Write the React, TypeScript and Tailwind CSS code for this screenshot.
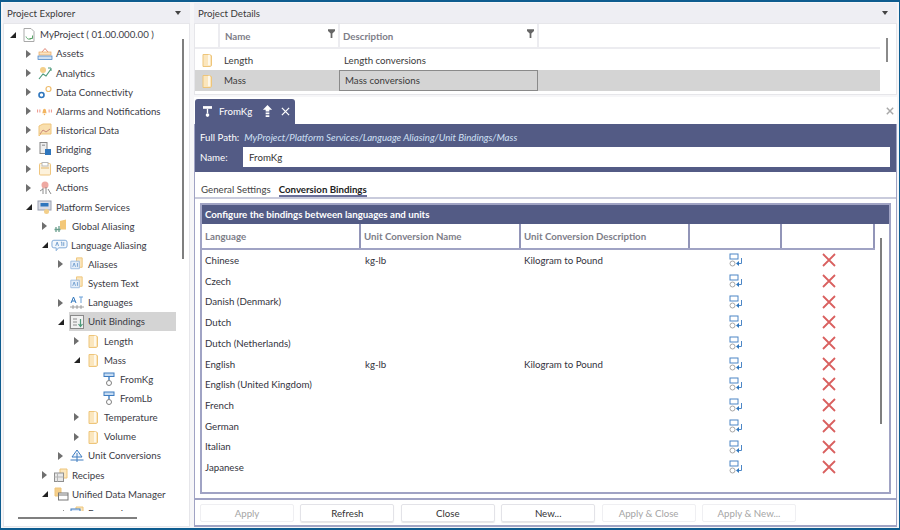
import type { ReactNode } from 'react';

const FONT = "font-['Lato','Open_Sans',sans-serif]";

const PAD = ['pl-[2px]', 'pl-[18px]', 'pl-[34px]', 'pl-[50px]', 'pl-[66px]', 'pl-[82px]'];

type Icon = () => ReactNode;

function Svg({ children, className = 'w-4 h-4' }: { children: ReactNode; className?: string }) {
  return (
    <svg viewBox="0 0 16 16" fill="none" className={`${className} shrink-0`}>
      {children}
    </svg>
  );
}

const Folder: Icon = () => (
  <Svg>
    <path d="M4 2.5h6.5l2 1.2v10l-1.5.8H4z" fill="#fbe6bd" stroke="#eec57a" />
    <path d="M10 2.8v10.5" stroke="#fff" strokeWidth="1.4" />
  </Svg>
);

const Project: Icon = () => (
  <Svg>
    <path d="M3 1.5h7l3 3v10H3z" fill="#fff" stroke="#a9a9a9" />
    <path d="M5 9.5c1 3 4 3.5 6 1.5M11.500 8.500v3h-3" stroke="#5aa469" />
  </Svg>
);

const Assets: Icon = () => (
  <Svg>
    <path d="M5 6l3-3.500L11 6" stroke="#e28a7a" />
    <rect x="2" y="6" width="12" height="3" fill="#fbe3c2" stroke="#e8a65f" strokeWidth="0.7" />
    <rect x="1" y="10" width="14" height="3.500" fill="#cfe0f3" stroke="#3e7cc0" strokeWidth="0.7" />
  </Svg>
);

const Analytics: Icon = () => (
  <Svg>
    <circle cx="6" cy="5" r="3" fill="#f3cf8a" />
    <path d="M2 14l4-5 3 2 5-7" stroke="#4d9a7a" strokeWidth="1.2" />
    <path d="M11 3h3v3" stroke="#4d9a7a" />
  </Svg>
);

const DataConn: Icon = () => (
  <Svg>
    <circle cx="4.500" cy="11" r="2.500" stroke="#2f76bd" strokeWidth="1.600" />
    <circle cx="11.500" cy="5" r="2.500" stroke="#eebc6c" strokeWidth="1.200" />
  </Svg>
);

const Alarm: Icon = () => (
  <svg viewBox="0 0 22 16" fill="none" className="w-[17px] h-4 shrink-0 -ml-[1px]">
    <path d="M8 11c1-1 .5-6 3-6s2 5 3 6z" fill="#f2b561" />
    <circle cx="11" cy="12.500" r="1" fill="#f2b561" />
    <path d="M2 6v4M5 6v4M17 6v4M20 6v4" stroke="#ee9d92" strokeWidth="1.400" />
  </svg>
);

const Historical: Icon = () => (
  <Svg>
    <path d="M2 4l4-2h8v10H4l-2 2z" fill="#f9dfae" stroke="#efc57d" />
    <path d="M3 12l3-4 3 2 4-3" stroke="#c98a7c" />
  </Svg>
);

const Bridging: Icon = () => (
  <Svg>
    <rect x="3" y="1.500" width="7" height="11" fill="#eee" stroke="#888" />
    <rect x="5" y="3.500" width="3" height="1.500" fill="#aaa" />
    <rect x="8" y="8" width="6" height="6" fill="#2f76bd" />
  </Svg>
);

const Reports: Icon = () => (
  <Svg>
    <rect x="2.500" y="2.500" width="11" height="11.500" rx="1" fill="#fdf2dc" stroke="#efc57d" />
    <rect x="5" y="1.500" width="6" height="3.500" fill="#fff" stroke="#b9b9b9" />
    <path d="M4 7h8" stroke="#e0b56a" />
  </Svg>
);

const Actions: Icon = () => (
  <Svg>
    <circle cx="8" cy="5" r="3.500" fill="#eea9a2" />
    <path d="M6 8v6M9 7v7M3 11l3-2M11 9l3 5" stroke="#8c8c8c" />
  </Svg>
);

const Platform: Icon = () => (
  <Svg>
    <rect x="1" y="2" width="13" height="9" fill="#dadde6" stroke="#9aa0b0" />
    <rect x="3.500" y="4" width="8" height="3.500" fill="#2f76bd" />
    <circle cx="9.500" cy="12.500" r="2.500" fill="#f3cf8a" />
  </Svg>
);

const GlobalAlias: Icon = () => (
  <Svg>
    <path d="M7 3l6-1.500v10H7z" fill="#f3c879" />
    <path d="M3 14V9M6 14V8M1.500 11.500h6" stroke="#6a9f8d" strokeWidth="1.300" />
  </Svg>
);

const Bubble: Icon = () => (
  <svg viewBox="0 0 18 16" fill="none" className="w-[17px] h-4 shrink-0 -ml-[2px]">
    <path d="M3 3h12a2 2 0 012 2v4a2 2 0 01-2 2H8l-2.500 3v-3H3a2 2 0 01-2-2V5a2 2 0 012-2z" fill="#f2f7fc" stroke="#7ba7d7" />
    <path d="M5 9l1.500-4L8 9M10.500 5h1v4M13.500 5v4" stroke="#4c83bf" strokeWidth="0.8" />
  </svg>
);

const AliasFolder: Icon = () => (
  <svg viewBox="0 0 18 16" fill="none" className="w-[17px] h-4 shrink-0 -ml-[1px]">
    <path d="M9 1.500h6v10H9z" fill="#fbe6bd" stroke="#eec57a" />
    <path d="M3 5h9v8H3z" fill="#e4eef9" stroke="#9dbce0" />
    <path d="M5 11l1.500-4L8 11M10 7v4" stroke="#5b8fc7" strokeWidth="0.8" />
  </svg>
);

const Languages: Icon = () => (
  <Svg>
    <path d="M2 8l2.500-6L7 8M3 6h3" stroke="#2f76bd" />
    <path d="M10 2h4M12 2v6" stroke="#6aa0d8" />
    <path d="M1 12h14M4 10v4M8 10v4M12 10v4" stroke="#8c8c8c" strokeWidth="0.8" />
  </Svg>
);

const UnitBindings: Icon = () => (
  <Svg>
    <rect x="1.500" y="1.500" width="13" height="13" fill="#f1f1f1" stroke="#8a8a8a" />
    <path d="M4 5h4M4 8h4M4 11h4" stroke="#8a8a8a" />
    <path d="M11.500 5v7M9.500 10l2 2.500 2-2.500" stroke="#4d9a7a" strokeWidth="1.200" />
  </Svg>
);

const Binding: Icon = () => (
  <Svg>
    <rect x="3" y="2" width="10" height="3.500" fill="#c6dcf3" stroke="#3e7cc0" />
    <path d="M8 5.500v4" stroke="#3e7cc0" strokeWidth="1.400" />
    <circle cx="8" cy="12" r="2.500" fill="#fff" stroke="#7f7f7f" />
  </Svg>
);

const UnitConv: Icon = () => (
  <Svg>
    <path d="M8 2L3 9h10z" fill="#f1f6fc" stroke="#3e7cc0" />
    <path d="M1.500 12h13M8 5v9" stroke="#3e7cc0" />
  </Svg>
);

const Recipes: Icon = () => (
  <Svg>
    <path d="M7 2h7v9H7z" fill="#fbe6bd" stroke="#eec57a" />
    <rect x="1.500" y="6" width="9" height="8.500" fill="#e8e8e8" stroke="#8f8f8f" />
    <path d="M4.500 6v8.500M1.500 10h9" stroke="#b5b5b5" />
  </Svg>
);

const Udm: Icon = () => (
  <Svg>
    <path d="M2 2h6v8H2z" fill="#f6cf8a" stroke="#eec57a" />
    <rect x="5.500" y="7" width="9.500" height="7" fill="#fff" stroke="#777" />
    <path d="M5.500 9h9.500" stroke="#777" />
  </Svg>
);

const Expressions: Icon = () => (
  <Svg>
    <path d="M7 2h7v9H7z" fill="#fbe6bd" stroke="#eec57a" />
    <rect x="2" y="4" width="9" height="8" fill="#dfeafa" stroke="#3e7cc0" />
  </Svg>
);

type Node = { label: string; depth: number; icon: Icon; arrow?: 'open' | 'closed'; selected?: boolean };

const tree: Node[] = [
  { label: 'MyProject ( 01.00.000.00 )', depth: 0, icon: Project, arrow: 'open' },
  { label: 'Assets', depth: 1, icon: Assets, arrow: 'closed' },
  { label: 'Analytics', depth: 1, icon: Analytics, arrow: 'closed' },
  { label: 'Data Connectivity', depth: 1, icon: DataConn, arrow: 'closed' },
  { label: 'Alarms and Notifications', depth: 1, icon: Alarm, arrow: 'closed' },
  { label: 'Historical Data', depth: 1, icon: Historical, arrow: 'closed' },
  { label: 'Bridging', depth: 1, icon: Bridging, arrow: 'closed' },
  { label: 'Reports', depth: 1, icon: Reports, arrow: 'closed' },
  { label: 'Actions', depth: 1, icon: Actions, arrow: 'closed' },
  { label: 'Platform Services', depth: 1, icon: Platform, arrow: 'open' },
  { label: 'Global Aliasing', depth: 2, icon: GlobalAlias, arrow: 'closed' },
  { label: 'Language Aliasing', depth: 2, icon: Bubble, arrow: 'open' },
  { label: 'Aliases', depth: 3, icon: AliasFolder, arrow: 'closed' },
  { label: 'System Text', depth: 3, icon: AliasFolder },
  { label: 'Languages', depth: 3, icon: Languages, arrow: 'closed' },
  { label: 'Unit Bindings', depth: 3, icon: UnitBindings, arrow: 'open', selected: true },
  { label: 'Length', depth: 4, icon: Folder, arrow: 'closed' },
  { label: 'Mass', depth: 4, icon: Folder, arrow: 'open' },
  { label: 'FromKg', depth: 5, icon: Binding },
  { label: 'FromLb', depth: 5, icon: Binding },
  { label: 'Temperature', depth: 4, icon: Folder, arrow: 'closed' },
  { label: 'Volume', depth: 4, icon: Folder, arrow: 'closed' },
  { label: 'Unit Conversions', depth: 3, icon: UnitConv, arrow: 'closed' },
  { label: 'Recipes', depth: 2, icon: Recipes, arrow: 'closed' },
  { label: 'Unified Data Manager', depth: 2, icon: Udm, arrow: 'open' },
  { label: 'Expressions', depth: 3, icon: Expressions, arrow: 'open' },
];

const bindings = [
  ['Chinese', 'kg-lb', 'Kilogram to Pound'],
  ['Czech', '', ''],
  ['Danish (Denmark)', '', ''],
  ['Dutch', '', ''],
  ['Dutch (Netherlands)', '', ''],
  ['English', 'kg-lb', 'Kilogram to Pound'],
  ['English (United Kingdom)', '', ''],
  ['French', '', ''],
  ['German', '', ''],
  ['Italian', '', ''],
  ['Japanese', '', ''],
];

const buttons = [
  { label: 'Apply', off: true },
  { label: 'Refresh' },
  { label: 'Close' },
  { label: 'New...' },
  { label: 'Apply & Close', off: true },
  { label: 'Apply & New...', off: true },
];

function Arrow({ kind }: { kind?: 'open' | 'closed' }) {
  return (
    <span className="w-[14px] h-full flex items-center justify-start pl-[4px] shrink-0">
      {kind === 'closed' && <span className="w-0 h-0 border-y-[4px] border-y-transparent border-l-[5px] border-l-[#6f6f6f]" />}
      {kind === 'open' && <span className="w-0 h-0 border-t-[6px] border-t-transparent border-r-[6px] border-r-[#222]" />}
    </span>
  );
}

function PanelTitle({ title }: { title: string }) {
  return (
    <div className="h-5 shrink-0 bg-[#eeeef3] flex items-center justify-between pl-1 pr-[9px] text-[#3a3a3a]">
      <span>{title}</span>
      <span className="w-0 h-0 border-x-[3px] border-x-transparent border-t-[4px] border-t-[#444]" />
    </div>
  );
}

function Explorer() {
  return (
    <div className="w-[187px] flex flex-col shrink-0">
      <PanelTitle title="Project Explorer" />
      <div className="relative flex-1 bg-white border border-[#e6e6ea] pt-[1px] overflow-hidden">
        <div className="h-[486px] overflow-hidden">
          {tree.map((n) => (
            <div key={n.label} className={`h-[19.15px] flex items-center ${PAD[n.depth]}`}>
              <Arrow kind={n.arrow} />
              <div className={`flex items-center h-full gap-[3px] ${n.selected ? 'bg-[#d4d4d4] w-[107px] ml-[1px]' : 'pl-[1px]'}`}>
                <n.icon />
                <span className="whitespace-nowrap text-[#3b3b45]">{n.label}</span>
              </div>
            </div>
          ))}
        </div>
        <div className="absolute left-[178px] top-[15px] w-[2px] h-[220px] bg-[#7f7f7f]" />
        <div className="absolute left-[14px] top-[493px] h-[2px] w-[119px] bg-[#7f7f7f]" />
      </div>
    </div>
  );
}

function FilterIcon() {
  return (
    <svg viewBox="0 0 8 10" className="w-[7px] h-[9px]">
      <path d="M0 0h8v2L5 5v5H3V5L0 2z" fill="#666" />
    </svg>
  );
}

function Details() {
  return (
    <div className="h-[92px] shrink-0 flex flex-col">
      <PanelTitle title="Project Details" />
      <div className="relative flex-1 bg-white border border-[#e6e6ea] pr-[16px]">
        <div className="flex h-[25px] border-b-2 border-[#ececf0] font-bold text-[#7d7d88]">
          <div className="w-[25px] border-r-2 border-[#ececf0]" />
          <div className="w-[120px] border-r-2 border-[#ececf0] flex justify-between pl-[5px] pr-[3px] pt-[5px]">
            <span>Name</span>
            <FilterIcon />
          </div>
          <div className="w-[199px] border-r-2 border-[#ececf0] flex justify-between pl-[3px] pr-[3px] pt-[5px]">
            <span>Description</span>
            <FilterIcon />
          </div>
        </div>
        <div className="flex h-[20px] items-center mt-[1px]">
          <div className="w-[24px] flex justify-center"><Folder /></div>
          <div className="w-[120px] pl-[5px]">Length</div>
          <div className="pl-[5px]">Length conversions</div>
        </div>
        <div className="flex h-[21px] items-center bg-[#d4d4d4]">
          <div className="w-[24px] flex justify-center"><Folder /></div>
          <div className="w-[120px] pl-[5px]">Mass</div>
          <div className="w-[199px] h-full border border-[#8a8a8a] pl-[5px] flex items-center">Mass conversions</div>
        </div>
        <div className="absolute right-[8px] top-[14px] w-[2px] h-[24px] bg-[#8a8a8a]" />
      </div>
    </div>
  );
}

function BindIcon() {
  return (
    <svg viewBox="0 0 14 14" fill="none" className="w-[14px] h-[14px]">
      <rect x="1" y="1" width="8" height="5" fill="#fff" stroke="#4c86c6" />
      <circle cx="3.500" cy="10.500" r="2.500" stroke="#a6a6a6" />
      <path d="M12.500 5v5.500H8" stroke="#4c86c6" />
      <path d="M10 8v5l-3-2.500z" fill="#2f76bd" />
    </svg>
  );
}

function DeleteIcon() {
  return (
    <svg viewBox="0 0 14 14" fill="none" className="w-[14px] h-[14px]">
      <path d="M1 1l12 12M13 1L1 13" stroke="#d9605f" strokeWidth="1.800" />
    </svg>
  );
}

function BindingsTable() {
  return (
    <div className="relative mx-[5px] mt-[4px] h-[291px] border-2 border-[#a0a3c4] overflow-hidden">
      <div className="h-[20px] bg-[#535b85] flex items-center pl-[3px] font-bold text-white -mt-[1px]">
        Configure the bindings between languages and units
      </div>
      <div className="flex h-[26px] w-[673px] border-b-2 border-[#a0a3c4] font-bold text-[#7d7d88]">
        {['Language', 'Unit Conversion Name', 'Unit Conversion Description', '', ''].map((h, i) => (
          <div key={i} className={`border-r-2 border-[#9295b8] pl-[3px] flex items-center ${['w-[159px]', 'w-[160px]', 'w-[169px]', 'w-[92px]', 'w-[93px]'][i]}`}>
            {h}
          </div>
        ))}
      </div>
      {bindings.map(([lang, name, desc]) => (
        <div key={lang} className="flex items-center h-[20.7px] text-[#33333d]">
          <div className="w-[159px] pl-[3px]">{lang}</div>
          <div className="w-[160px] pl-[4px]">{name}</div>
          <div className="w-[169px] pl-[3px]">{desc}</div>
          <div className="w-[92px] flex justify-center"><BindIcon /></div>
          <div className="w-[92px] flex justify-center pl-[1px]"><DeleteIcon /></div>
        </div>
      ))}
      <div className="absolute right-[7px] top-[33px] w-[2px] h-[186px] bg-[#7f7f7f]" />
    </div>
  );
}

function Editor() {
  return (
    <div className="flex-1 flex flex-col mt-[2px] min-h-0 bg-white relative">
      <div className="h-[27px] shrink-0 flex items-start pl-[1px] pt-[2px]">
        <div className="w-[100px] h-[25px] bg-[#535b85] rounded-t-[3px] flex items-center pl-[8px] gap-[7px] text-white">
          <svg viewBox="0 0 10 14" fill="none" className="w-[9px] h-[13px]">
            <path d="M0 1h10v3H0z" fill="#fff" />
            <path d="M5 4v5" stroke="#fff" strokeWidth="1.500" />
            <circle cx="5" cy="11" r="2" fill="#fff" />
          </svg>
          <span>FromKg</span>
          <svg viewBox="0 0 12 14" fill="none" className="w-[11px] h-[13px] ml-[3px]">
            <path d="M6 0l5 5H8v2H4V5H1z" fill="#fff" />
            <path d="M4 8h4v2H4zM4 11h4v2H4z" fill="#fff" />
          </svg>
          <svg viewBox="0 0 10 10" fill="none" className="w-[9px] h-[9px] ml-[1px]">
            <path d="M1 1l8 8M9 1L1 9" stroke="#fff" strokeWidth="1.400" />
          </svg>
        </div>
        <svg viewBox="0 0 10 10" fill="none" className="absolute right-[3px] top-[10px] w-[8px] h-[8px]">
          <path d="M1 1l8 8M9 1L1 9" stroke="#a8a8a8" strokeWidth="1.800" />
        </svg>
      </div>
      <div className="flex-1 flex flex-col border-x border-b-2 border-[#a0a3c4] min-h-0">
        <div className="h-[48px] shrink-0 bg-[#535b85] text-white px-[5px] pt-[4px]">
          <div className="flex gap-[5px] h-[18px] items-center">
            <span>Full Path:</span>
            <span className="italic text-[#cfe0f5]">MyProject/Platform Services/Language Aliasing/Unit Bindings/Mass</span>
          </div>
          <div className="flex items-center h-[20px] mt-[1px]">
            <span className="w-[43px] shrink-0">Name:</span>
            <div className="flex-1 h-[20px] bg-white text-[#333] pl-[6px] flex items-center mr-[1px]">FromKg</div>
          </div>
        </div>
        <div className="h-[27px] shrink-0 border-b-2 border-[#c9cbdc] flex items-end pl-[6px] gap-[8px]">
          <span className="text-[#444] leading-[12px] mb-[2px]">General Settings</span>
          <span className="font-bold text-[#222] leading-[12px] border-b-2 border-[#6a6f99]">Conversion Bindings</span>
        </div>
        <BindingsTable />
        <div className="mt-[4px] flex-1 border-t-2 border-[#a0a3c4] flex gap-[6.4px] pl-[5px] pt-[4px]">
          {buttons.map((b) => (
            <div
              key={b.label}
              className={`w-[94px] h-[18px] rounded-[2px] border flex items-center justify-center ${
                b.off ? 'border-[#efeff2] text-[#a5a5a5]' : 'border-[#e3e3e8] text-[#333] shadow-[0_1px_1px_rgba(0,0,0,0.1)]'
              }`}
            >
              {b.label}
            </div>
          ))}
        </div>
      </div>
    </div>
  );
}

export default function App() {
  return (
    <div className={`${FONT} w-[900px] h-[530px] overflow-hidden bg-[#f6f6f8] border-t-[2px] border-x border-b-[2px] border-x-[#0e5c8f] border-y-[#0e5c8f] text-[9.7px] text-[#3a3a3a] pt-[1px] px-[2px] pb-[1px] flex gap-[4px]`}>
      <Explorer />
      <div className="flex-1 flex flex-col min-w-0">
        <Details />
        <Editor />
      </div>
    </div>
  );
}
